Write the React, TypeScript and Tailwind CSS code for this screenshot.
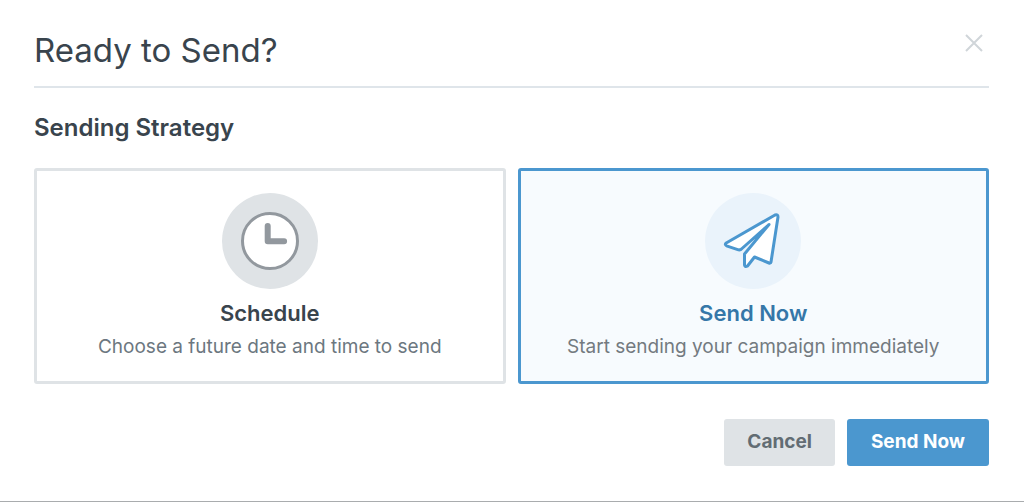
import { useState, type ReactNode } from 'react'

type Strategy = 'schedule' | 'now'

function CloseIcon() {
  return (
    <svg className="size-5" viewBox="0 0 20 20" fill="none" stroke="currentColor" strokeWidth="2" aria-hidden="true">
      <path d="M2 2l16 16M18 2L2 18" />
    </svg>
  )
}

function ClockIcon() {
  return (
    <svg className="size-24" viewBox="0 0 96 96" aria-hidden="true">
      <circle cx="48" cy="48" r="48" fill="#dfe3e6" />
      <circle cx="48" cy="48" r="27.5" fill="#fff" stroke="#92989e" strokeWidth="3" />
      <path d="M45.7 33v15.2h16.4" fill="none" stroke="#92989e" strokeWidth="6" strokeLinecap="round" strokeLinejoin="round" />
    </svg>
  )
}

function PlaneIcon() {
  return (
    <svg className="size-24" viewBox="0 0 96 96" aria-hidden="true">
      <circle cx="48" cy="48" r="48" fill="#eaf3fb" />
      <path
        d="M33.5 56.8L21.5 52.8Q19.3 51.5 21.2 50L70 22Q73 21 73 24L66 69Q65.500 70.5 64 70L49.5 64L42.5 73Q40 74.5 39.500 72V61L64 31.5L37 55.500Q35.500 57.200 33.5 56.8Z"
        fill="#fff"
        stroke="#4b97cf"
        strokeWidth="3"
        strokeLinecap="round"
        strokeLinejoin="round"
      />
    </svg>
  )
}

type CardProps = {
  icon: ReactNode
  title: string
  description: string
  selected: boolean
  onClick: () => void
}

function StrategyCard({ icon, title, description, selected, onClick }: CardProps) {
  return (
    <button
      type="button"
      aria-pressed={selected}
      onClick={onClick}
      className={`flex flex-1 flex-col items-center rounded-[3px] border-3 px-4 pt-[22px] pb-5 ${
        selected ? 'border-[#4b97cf] bg-[#f7fbfe]' : 'border-[#dfe3e6] bg-white'
      }`}
    >
      {icon}
      <span className={`mt-2.5 text-[22px] leading-7 font-semibold ${selected ? 'text-[#3577a8]' : 'text-[#39444d]'}`}>
        {title}
      </span>
      <span className={`mt-1.5 text-[19px] leading-7 ${selected ? 'text-[#737a80]' : 'text-[#6c7780]'}`}>
        {description}
      </span>
    </button>
  )
}

export default function App() {
  const [strategy, setStrategy] = useState<Strategy>('now')

  return (
    <main className="border-b border-[#a9acae] bg-white pt-[30px] pr-[35px] pb-[35px] pl-[34px] font-[Inter,sans-serif] text-[#39444d]">
      <header className="flex items-start justify-between border-b-2 border-[#dfe5ea] pb-4">
        <h1 className="text-[33px] leading-10">Ready to Send?</h1>
        <button type="button" aria-label="Close" className="mt-[3px] mr-[5px] text-[#d0d5d9]">
          <CloseIcon />
        </button>
      </header>

      <h2 className="mt-[26px] text-2xl leading-7 font-semibold">Sending Strategy</h2>

      <div className="mt-[26px] flex gap-3">
        <StrategyCard
          icon={<ClockIcon />}
          title="Schedule"
          description="Choose a future date and time to send"
          selected={strategy === 'schedule'}
          onClick={() => setStrategy('schedule')}
        />
        <StrategyCard
          icon={<PlaneIcon />}
          title="Send Now"
          description="Start sending your campaign immediately"
          selected={strategy === 'now'}
          onClick={() => setStrategy('now')}
        />
      </div>

      <footer className="mt-[35px] flex justify-end gap-3 text-[19px] leading-7 font-bold">
        <button type="button" className="rounded-[3px] bg-[#dfe3e6] px-[23px] pt-[9px] pb-2.5 text-[#626c73]">
          Cancel
        </button>
        <button type="button" className="rounded-[3px] bg-[#4b97cf] px-6 pt-[9px] pb-2.5 text-white">
          Send Now
        </button>
      </footer>
    </main>
  )
}
